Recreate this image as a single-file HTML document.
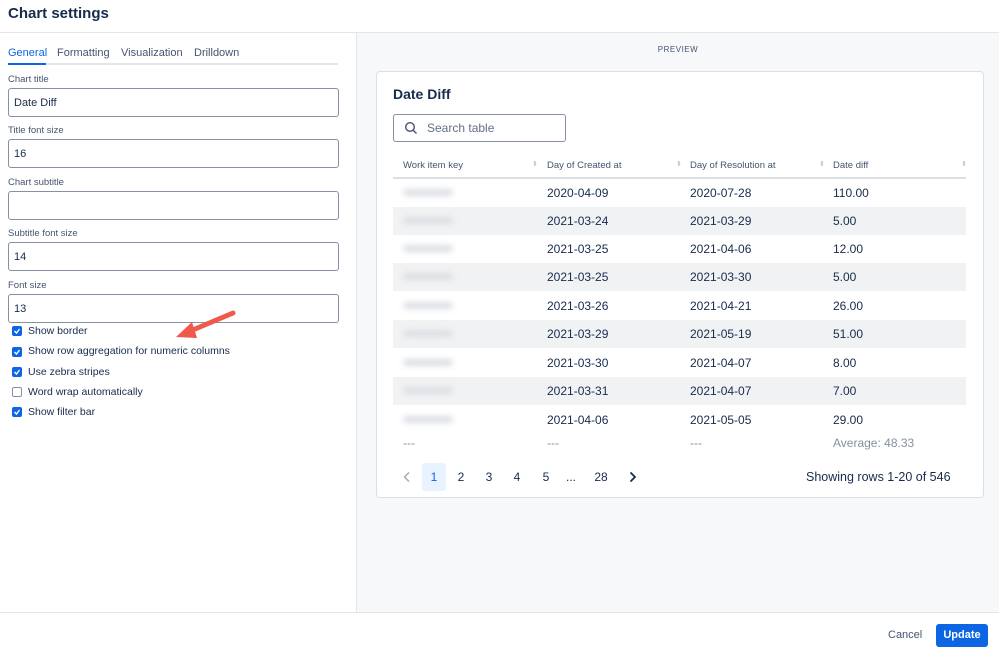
<!DOCTYPE html>
<html><head><style>
*{box-sizing:border-box;margin:0;padding:0}
body{width:999px;height:657px;overflow:hidden;font-family:"Liberation Sans",sans-serif;color:#172b4d;background:#fff;position:relative;font-size:11px}
.abs{position:absolute}
.hdr{left:0;top:0;width:999px;height:33px;border-bottom:1px solid #e3e5e8}
.hdr h1{position:absolute;left:8px;top:5px;font-size:15px;font-weight:bold;color:#172b4d}
.left{left:0;top:33px;width:357px;height:579px;border-right:1px solid #e3e5e8}
.tabs{left:8px;top:47px;width:330px;height:18px;border-bottom:2px solid #e3e5e8;font-size:11px;color:#44546f}
.tabs span{position:absolute;top:0}
.lbl{left:8px;font-size:9.5px;color:#44546f}
.inp{left:8px;width:331px;height:29px;border:1px solid #8590a2;border-radius:3px;padding:0 0 0 5px;line-height:29px;font-size:11px;color:#172b4d}
.cb{left:12px;width:10px;height:10px;border-radius:2px;background:#0c66e4}
.cb.off{background:#fff;border:1px solid #8590a2}
.cb svg{position:absolute;left:1px;top:1px}
.cbl{left:28px;font-size:10.5px;color:#172b4d}
.right{left:357px;top:33px;width:642px;height:579px;background:#f7f8f9}
.card{left:376px;top:71px;width:608px;height:427px;background:#fff;border:1px solid #dcdfe4;border-radius:4px}
.row{left:393px;width:573px;height:28px}
.cell{position:absolute;font-size:12px;top:7px;color:#172b4d}
.blur{position:absolute;left:10px;top:10px;width:50px;height:7px;background:#dcdfe4;filter:blur(3px);border-radius:4px}
.th{position:absolute;top:160px;font-size:9.5px;color:#44546f}
.sort{position:absolute;top:160px;font-size:7px;color:#c1c7d0}
.pg{position:absolute;top:470px;font-size:12px;color:#172b4d;width:24px;text-align:center}
.foot{left:0;top:612px;width:999px;height:45px;border-top:1px solid #e3e5e8}
</style></head><body>
<div class="abs hdr"><h1>Chart settings</h1></div>
<div class="abs left"></div>
<div class="abs tabs"><span style="left:0;color:#0c66e4">General</span><span style="left:49px">Formatting</span><span style="left:113px">Visualization</span><span style="left:186px">Drilldown</span></div>
<div class="abs" style="left:8px;top:63px;width:38px;height:2px;background:#0c66e4"></div>
<div class="abs lbl" style="top:74px">Chart title</div>
<div class="abs inp" style="top:88px">Date Diff</div>
<div class="abs lbl" style="top:125px">Title font size</div>
<div class="abs inp" style="top:139px">16</div>
<div class="abs lbl" style="top:177px">Chart subtitle</div>
<div class="abs inp" style="top:191px"></div>
<div class="abs lbl" style="top:228px">Subtitle font size</div>
<div class="abs inp" style="top:242px">14</div>
<div class="abs lbl" style="top:280px">Font size</div>
<div class="abs inp" style="top:294px">13</div>
<div class="abs cb" style="top:326px"><svg width="8" height="8"><path d="M1.5 4l2 2 3-4" stroke="#fff" stroke-width="1.4" fill="none"/></svg></div><div class="abs cbl" style="top:325px">Show border</div>
<div class="abs cb" style="top:347px"><svg width="8" height="8"><path d="M1.5 4l2 2 3-4" stroke="#fff" stroke-width="1.4" fill="none"/></svg></div><div class="abs cbl" style="top:345px">Show row aggregation for numeric columns</div>
<div class="abs cb" style="top:367px"><svg width="8" height="8"><path d="M1.5 4l2 2 3-4" stroke="#fff" stroke-width="1.4" fill="none"/></svg></div><div class="abs cbl" style="top:366px">Use zebra stripes</div>
<div class="abs cb off" style="top:387px"></div><div class="abs cbl" style="top:386px">Word wrap automatically</div>
<div class="abs cb" style="top:407px"><svg width="8" height="8"><path d="M1.5 4l2 2 3-4" stroke="#fff" stroke-width="1.4" fill="none"/></svg></div><div class="abs cbl" style="top:406px">Show filter bar</div>
<svg class="abs" style="left:170px;top:305px" width="75" height="40"><path d="M63 8 L18 27" stroke="#ef5a4a" stroke-width="5" stroke-linecap="round"/><path d="M6 32 L22 17 L27 33 Z" fill="#ef5a4a"/></svg>

<div class="abs right"></div>
<div class="abs" style="left:357px;top:45px;width:642px;text-align:center;font-size:8px;letter-spacing:.5px;color:#44546f">PREVIEW</div>
<div class="abs card"></div>
<div class="abs" style="left:393px;top:86px;font-size:14px;font-weight:bold">Date Diff</div>
<div class="abs" style="left:393px;top:114px;width:173px;height:28px;border:1px solid #8590a2;border-radius:3px"></div>
<svg class="abs" style="left:404px;top:121px" width="14" height="14"><circle cx="6" cy="6" r="4.3" stroke="#44546f" stroke-width="1.4" fill="none"/><path d="M9.2 9.2l3.3 3.3" stroke="#44546f" stroke-width="1.4"/></svg>
<div class="abs" style="left:427px;top:121px;font-size:12px;color:#626f86">Search table</div>
<div class="th" style="left:403px">Work item key</div><div class="sort" style="left:532px">⬍</div>
<div class="th" style="left:547px">Day of Created at</div><div class="sort" style="left:676px">⬍</div>
<div class="th" style="left:690px">Day of Resolution at</div><div class="sort" style="left:819px">⬍</div>
<div class="th" style="left:833px">Date diff</div><div class="sort" style="left:961px">⬍</div>
<div class="abs" style="left:393px;top:177px;width:573px;height:2px;background:#dcdfe4"></div>

<div class="abs row" style="top:179px"><div class="blur"></div><div class="cell" style="left:154px">2020-04-09</div><div class="cell" style="left:297px">2020-07-28</div><div class="cell" style="left:440px">110.00</div></div>
<div class="abs row" style="top:207px;background:#f1f2f4"><div class="blur"></div><div class="cell" style="left:154px">2021-03-24</div><div class="cell" style="left:297px">2021-03-29</div><div class="cell" style="left:440px">5.00</div></div>
<div class="abs row" style="top:235px"><div class="blur"></div><div class="cell" style="left:154px">2021-03-25</div><div class="cell" style="left:297px">2021-04-06</div><div class="cell" style="left:440px">12.00</div></div>
<div class="abs row" style="top:263px;background:#f1f2f4"><div class="blur"></div><div class="cell" style="left:154px">2021-03-25</div><div class="cell" style="left:297px">2021-03-30</div><div class="cell" style="left:440px">5.00</div></div>
<div class="abs row" style="top:292px"><div class="blur"></div><div class="cell" style="left:154px">2021-03-26</div><div class="cell" style="left:297px">2021-04-21</div><div class="cell" style="left:440px">26.00</div></div>
<div class="abs row" style="top:320px;background:#f1f2f4"><div class="blur"></div><div class="cell" style="left:154px">2021-03-29</div><div class="cell" style="left:297px">2021-05-19</div><div class="cell" style="left:440px">51.00</div></div>
<div class="abs row" style="top:349px"><div class="blur"></div><div class="cell" style="left:154px">2021-03-30</div><div class="cell" style="left:297px">2021-04-07</div><div class="cell" style="left:440px">8.00</div></div>
<div class="abs row" style="top:377px;background:#f1f2f4"><div class="blur"></div><div class="cell" style="left:154px">2021-03-31</div><div class="cell" style="left:297px">2021-04-07</div><div class="cell" style="left:440px">7.00</div></div>
<div class="abs row" style="top:406px"><div class="blur"></div><div class="cell" style="left:154px">2021-04-06</div><div class="cell" style="left:297px">2021-05-05</div><div class="cell" style="left:440px">29.00</div></div>
<div class="abs" style="left:403px;top:436px;font-size:12px;color:#8590a2">---</div>
<div class="abs" style="left:547px;top:436px;font-size:12px;color:#8590a2">---</div>
<div class="abs" style="left:690px;top:436px;font-size:12px;color:#8590a2">---</div>
<div class="abs" style="left:833px;top:436px;font-size:12px;color:#8590a2">Average: 48.33</div>

<div class="abs" style="left:422px;top:463px;width:24px;height:28px;background:#e9f2ff;border-radius:3px"></div>
<svg class="abs" style="left:402px;top:471px" width="10" height="12"><path d="M7 1.5L2.5 6 7 10.5" stroke="#a5adba" stroke-width="1.5" fill="none"/></svg>
<div class="pg" style="left:422px;color:#0c66e4">1</div>
<div class="pg" style="left:449px">2</div>
<div class="pg" style="left:477px">3</div>
<div class="pg" style="left:505px">4</div>
<div class="pg" style="left:534px">5</div>
<div class="pg" style="left:559px">...</div>
<div class="pg" style="left:589px">28</div>
<svg class="abs" style="left:628px;top:471px" width="10" height="12"><path d="M2.5 1.5L7 6 2.5 10.5" stroke="#172b4d" stroke-width="1.8" fill="none"/></svg>
<div class="abs" style="left:806px;top:470px;font-size:12.5px">Showing rows 1-20 of 546</div>

<div class="abs foot"></div>
<div class="abs" style="left:888px;top:629px;font-size:11px;color:#44546f">Cancel</div>
<div class="abs" style="left:936px;top:624px;width:52px;height:23px;background:#0c66e4;border-radius:3px;color:#fff;font-size:11px;text-align:center;line-height:23px;font-weight:bold">Update</div>
</body></html>
